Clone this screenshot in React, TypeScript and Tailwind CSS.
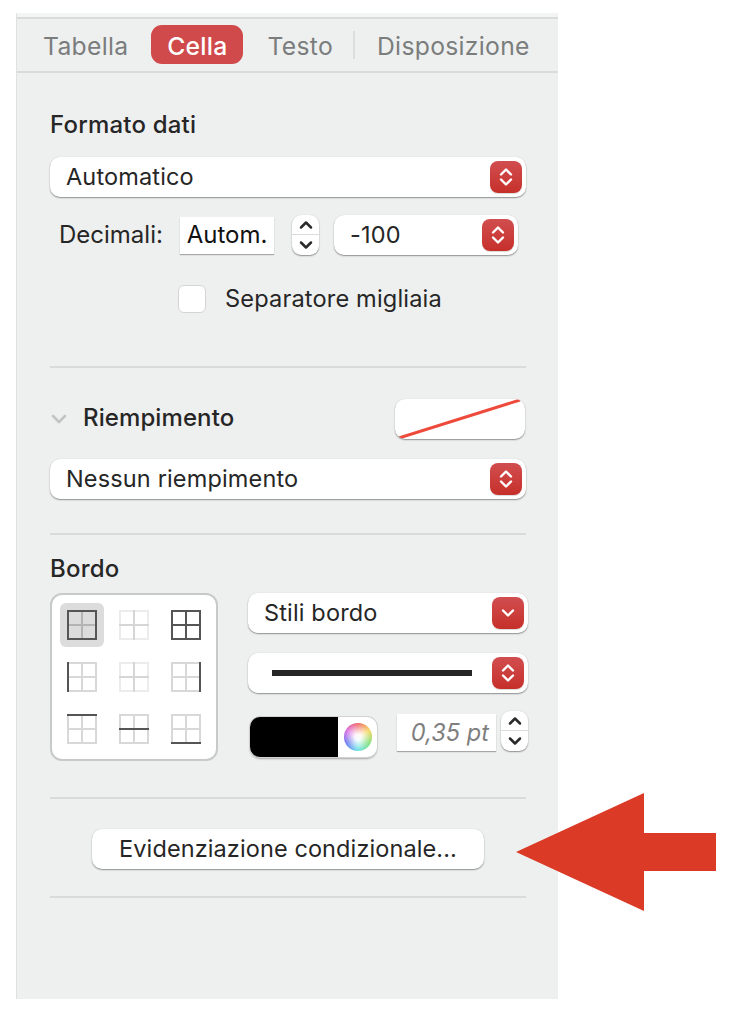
const controlShadow = 'shadow-[0_1px_1.5px_rgba(0,0,0,0.4),0_0_1px_rgba(0,0,0,0.12)]'

function Chevrons({ up = true, down = true, color = 'white', width = 16 }: { up?: boolean; down?: boolean; color?: string; width?: number }) {
  return (
    <svg width={width} height="24" viewBox="0 0 16 24" fill="none" stroke={color} strokeWidth="2.4" strokeLinecap="round" strokeLinejoin="round">
      {up && <path d="M3 9.5 8 4.5l5 5" />}
      {down && <path d="M3 14.5l5 5 5-5" />}
    </svg>
  )
}

function RedButton({ single = false }: { single?: boolean }) {
  return (
    <div className="flex h-8 w-8 shrink-0 items-center justify-center rounded-[8px] bg-linear-to-b from-[#d14d4f] to-[#c62f29] shadow-[0_1px_1px_rgba(0,0,0,0.15)]">
      {single ? (
        <svg width="16" height="12" viewBox="0 0 16 12" fill="none" stroke="white" strokeWidth="2.4" strokeLinecap="round" strokeLinejoin="round">
          <path d="M3 3.5l5 5 5-5" />
        </svg>
      ) : (
        <Chevrons />
      )}
    </div>
  )
}

function Select({ label, className, single, children }: { label?: string; className: string; single?: boolean; children?: React.ReactNode }) {
  return (
    <div className={`flex h-10 items-center justify-between rounded-[10px] bg-white pr-1 ${controlShadow} ${className}`}>
      {label ? <span className="text-[23.5px] leading-none tracking-[0.15px] text-[#262626]">{label}</span> : children}
      <RedButton single={single} />
    </div>
  )
}

function Stepper({ className }: { className: string }) {
  return (
    <div className={`flex h-10 w-[27px] shrink-0 flex-col rounded-[9px] bg-white ${controlShadow} ${className}`}>
      <div className="flex h-5 items-center justify-center border-b border-[#dcdcdc]">
        <svg width="16" height="10" viewBox="0 0 16 10" fill="none" stroke="#2a2a2a" strokeWidth="2.5" strokeLinecap="round" strokeLinejoin="round">
          <path d="M3 7.5l5-5 5 5" />
        </svg>
      </div>
      <div className="flex h-5 items-center justify-center">
        <svg width="16" height="10" viewBox="0 0 16 10" fill="none" stroke="#2a2a2a" strokeWidth="2.5" strokeLinecap="round" strokeLinejoin="round">
          <path d="M3 2.5l5 5 5-5" />
        </svg>
      </div>
    </div>
  )
}

function Divider({ className }: { className: string }) {
  return <div className={`h-[2px] w-[476px] bg-[#d9dbda] ${className}`} />
}

type Edge = 'top' | 'bottom' | 'left' | 'right' | 'midH' | 'midV'

const edgePaths: Record<Edge, string> = {
  top: 'M0 1h30',
  bottom: 'M0 29h30',
  left: 'M1 0v30',
  right: 'M29 0v30',
  midH: 'M0 15h30',
  midV: 'M15 0v30',
}

const allEdges: Edge[] = ['top', 'bottom', 'left', 'right', 'midH', 'midV']

function BorderIcon({ dark = [], base = '#d8d8d8', mid }: { dark?: Edge[]; base?: string; mid?: string }) {
  return (
    <svg width="30" height="30" viewBox="0 0 30 30" fill="none" strokeWidth="2">
      {allEdges.filter((e) => !dark.includes(e)).map((e) => (
        <path key={e} d={edgePaths[e]} stroke={(e === 'midH' || e === 'midV') && mid ? mid : base} />
      ))}
      {dark.map((e) => (
        <path key={e} d={edgePaths[e]} stroke="#555555" />
      ))}
    </svg>
  )
}

const outer: Edge[] = ['top', 'bottom', 'left', 'right']

const borderCells = [
  { dark: outer, base: '#b4b4b4', selected: true },
  { base: '#ececec', mid: '#d6d6d6' },
  { dark: allEdges },
  { dark: ['left'] as Edge[] },
  { base: '#ececec', mid: '#d6d6d6' },
  { dark: ['right'] as Edge[] },
  { dark: ['top'] as Edge[] },
  { dark: ['midH'] as Edge[] },
  { dark: ['bottom'] as Edge[] },
]

export default function App() {
  return (
    <div className="relative h-[1016px] w-[742px] overflow-hidden bg-white font-['Inter',sans-serif]">
      <div className="pt-[13px] pl-4">
        <div className="h-[986px] w-[542px] border-l border-[#dfe0e0] bg-[#eef0ef]">
          <div className="h-1 bg-[#f3f4f4]" />
          <div className="h-[2px] bg-[#d9dbda]" />

          {/* Tabs */}
          <div className="flex h-[54px] items-center border-b-2 border-[#d9dbda] text-[24.7px] leading-none tracking-[0.3px] text-[#7b7d7d]">
            <span className="mt-[3px] ml-[26px]">Tabella</span>
            <span className="mb-[1px] ml-[23px] flex h-[39px] w-[92px] items-center justify-center rounded-[11px] bg-[#d04a4b] pt-[3px] font-medium text-white">Cella</span>
            <span className="mt-[3px] ml-[24px]">Testo</span>
            <div className="ml-[20px] h-7 w-[2px] bg-[#dcdddd]" />
            <span className="mt-[3px] ml-[22px]">Disposizione</span>
          </div>

          <div className="pl-[33px]">
            <div className="mt-[39px] text-[24px] leading-[26px] font-medium tracking-[0.2px] text-[#262626]">Formato dati</div>
            <Select label="Automatico" className="mt-[19px] w-[476px] pl-[16px]" />

            <div className="mt-[18px] flex items-center">
              <span className="ml-[9px] w-[121px] text-[24px] leading-none text-[#262626]">Decimali:</span>
              <div className="flex h-[37px] w-[94px] items-center justify-center bg-white text-[24px] leading-none text-[#111] shadow-[0_1px_1px_rgba(0,0,0,0.3)]">Autom.</div>
              <Stepper className="ml-[18px]" />
              <Select label="-100" className="ml-[15px] w-[184px] pl-[16px]" />
            </div>

            <div className="mt-[30px] flex items-center">
              <div className="ml-[128px] h-[28px] w-[28px] rounded-[6px] border border-[#d4d4d4] bg-white" />
              <span className="ml-[19px] text-[23.6px] leading-none tracking-[0.15px] text-[#262626]">Separatore migliaia</span>
            </div>

            <Divider className="mt-[53px]" />

            <div className="mt-[31px] flex h-10 w-[475px] items-center">
              <svg width="16" height="10" viewBox="0 0 16 10" fill="none" stroke="#c3c5c5" strokeWidth="2.6" strokeLinecap="round" strokeLinejoin="round" className="ml-[1px]">
                <path d="M2 2l6 6 6-6" />
              </svg>
              <span className="mb-[3px] ml-4 text-[24px] leading-none font-medium tracking-[0.1px] text-[#262626]">Riempimento</span>
              <div className={`ml-auto h-10 w-[130px] overflow-hidden rounded-[10px] bg-white ${controlShadow}`}>
                <svg width="130" height="40" viewBox="0 0 130 40" className="block">
                  <path d="M4 39 125 1" stroke="#ee4a3c" strokeWidth="3" />
                </svg>
              </div>
            </div>

            <Select label="Nessun riempimento" className="mt-5 w-[476px] pl-[16px]" />

            <Divider className="mt-[34px]" />

            <div className="mt-[21px] text-[24px] leading-[26px] font-medium tracking-[0.2px] text-[#262626]">Bordo</div>

            <div className="mt-[11px] flex items-start">
              <div className="grid h-[168px] w-[168px] grid-cols-3 content-start gap-2 rounded-[12px] border-2 border-[#c8c9c9] bg-white p-2">
                {borderCells.map((cell, i) => (
                  <div key={i} className={`flex h-11 w-11 items-center justify-center rounded-[6px] ${cell.selected ? 'bg-[#dcdcdc]' : ''}`}>
                    <BorderIcon dark={cell.dark} base={cell.base} mid={cell.mid} />
                  </div>
                ))}
              </div>

              <div className="ml-[30px] w-[280px]">
                <Select label="Stili bordo" single className="w-[280px] pl-[16px]" />
                <Select className="mt-5 w-[280px]">
                  <div className="ml-[24px] h-[6px] w-[200px] bg-[#262626]" />
                </Select>
                <div className="mt-[18px] flex items-start">
                  <div className="mt-[6px] ml-[2px] flex h-10 w-[128px] overflow-hidden rounded-[10px] bg-white shadow-[0_0_0_1px_#d2d2d2,0_2px_2px_rgba(0,0,0,0.3)]">
                    <div className="w-[88px] bg-black" />
                    <div className="flex flex-1 items-center justify-center">
                      <div className="h-7 w-7 rounded-full bg-[radial-gradient(circle,rgba(255,255,255,0.95)_15%,rgba(255,255,255,0)_75%),conic-gradient(#f05a5a,#f5d24a,#6fdc6a,#5fe0e6,#5a6ef0,#d65ae0,#f05a5a)]" />
                    </div>
                  </div>
                  <div className="mt-[3px] ml-[20px] flex h-[37px] w-[99px] items-center justify-end bg-white pr-[7px] text-[23.6px] leading-none text-[#7f7f7f] italic shadow-[0_1px_1px_rgba(0,0,0,0.3)]">0,35 pt</div>
                  <Stepper className="ml-[5px]" />
                </div>
              </div>
            </div>

            <Divider className="mt-[36px]" />

            <div className={`mt-[30px] ml-[42px] flex h-10 w-[392px] items-center justify-center rounded-[10px] bg-white text-[23.5px] leading-none tracking-[0.1px] text-[#262626] ${controlShadow}`}>
              Evidenziazione condizionale...
            </div>

            <Divider className="mt-[27px]" />
          </div>
        </div>
      </div>

      {/* annotation arrow */}
      <svg width="742" height="1016" viewBox="0 0 742 1016" className="pointer-events-none absolute top-0 left-0">
        <polygon points="516,852 644,793 644,833 716,833 716,871 644,871 644,911" fill="#db3b26" />
      </svg>
    </div>
  )
}
